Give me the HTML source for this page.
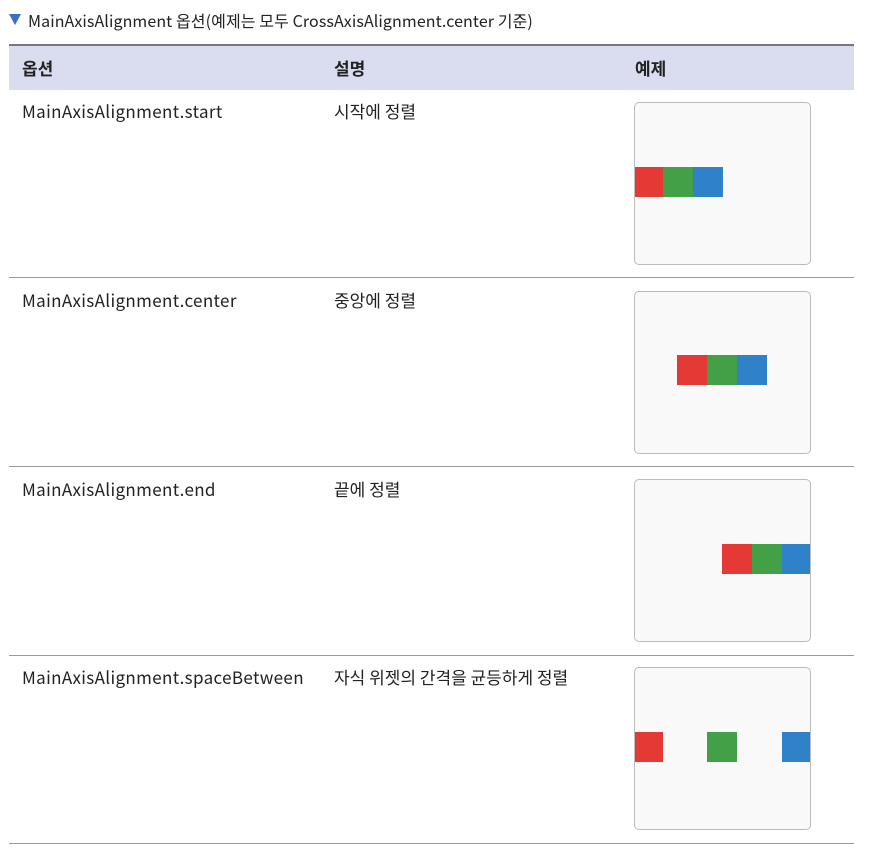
<!DOCTYPE html>
<html><head><meta charset="utf-8"><style>
body{margin:0;width:889px;height:853px;background:#fff;position:relative;font-family:"Noto Sans CJK KR","Liberation Sans",sans-serif;color:#222;overflow:hidden}
.a{position:absolute;white-space:nowrap}
.t{font-size:17px;line-height:20px}
.l{letter-spacing:0.35px}
.box{position:absolute;left:634px;width:175px;height:161px;border:1px solid #bbb;border-radius:5px;background:#f9f9f9;overflow:hidden}
.sq{position:absolute;width:30px;height:30px}
.r{background:#e53935}.g{background:#43a047}.b{background:#2f82c8}
.line{position:absolute;left:9px;width:845px;height:1px;background:#9a9a9a}
</style></head><body>
<div class="a" style="left:9px;top:14px;width:0;height:0;border-left:6px solid transparent;border-right:6px solid transparent;border-top:11px solid #3a6fc4"></div>
<div class="a t" style="left:28px;top:10px;font-size:16px;letter-spacing:0.1px">MainAxisAlignment 옵션(예제는 모두 CrossAxisAlignment.center 기준)</div>
<div class="a" style="left:9px;top:44px;width:845px;height:44px;background:#d9ddef;border-top:2px solid #777"></div>
<div class="a t" style="left:22px;top:58px;font-weight:bold">옵션</div>
<div class="a t" style="left:334px;top:58px;font-weight:bold">설명</div>
<div class="a t" style="left:635px;top:58px;font-weight:bold">예제</div>

<div class="a t l" style="left:22px;top:101px">MainAxisAlignment.start</div>
<div class="a t" style="left:334px;top:101px">시작에 정렬</div>
<div class="box" style="top:102px"><div class="sq r" style="left:0;top:64px;width:28px"></div><div class="sq g" style="left:28px;top:64px"></div><div class="sq b" style="left:58px;top:64px"></div></div>
<div class="line" style="top:277px"></div>

<div class="a t l" style="left:22px;top:290px">MainAxisAlignment.center</div>
<div class="a t" style="left:334px;top:290px">중앙에 정렬</div>
<div class="box" style="top:291px"><div class="sq r" style="left:42px;top:63px"></div><div class="sq g" style="left:72px;top:63px"></div><div class="sq b" style="left:102px;top:63px"></div></div>
<div class="line" style="top:466px"></div>

<div class="a t l" style="left:22px;top:479px">MainAxisAlignment.end</div>
<div class="a t" style="left:334px;top:479px">끝에 정렬</div>
<div class="box" style="top:479px"><div class="sq r" style="left:87px;top:64px"></div><div class="sq g" style="left:117px;top:64px"></div><div class="sq b" style="left:147px;top:64px;width:28px"></div></div>
<div class="line" style="top:655px"></div>

<div class="a t l" style="left:22px;top:667px">MainAxisAlignment.spaceBetween</div>
<div class="a t" style="left:334px;top:667px">자식 위젯의 간격을 균등하게 정렬</div>
<div class="box" style="top:667px"><div class="sq r" style="left:0;top:64px;width:28px"></div><div class="sq g" style="left:72px;top:64px"></div><div class="sq b" style="left:147px;top:64px;width:28px"></div></div>
<div class="line" style="top:843px"></div>
</body></html>
